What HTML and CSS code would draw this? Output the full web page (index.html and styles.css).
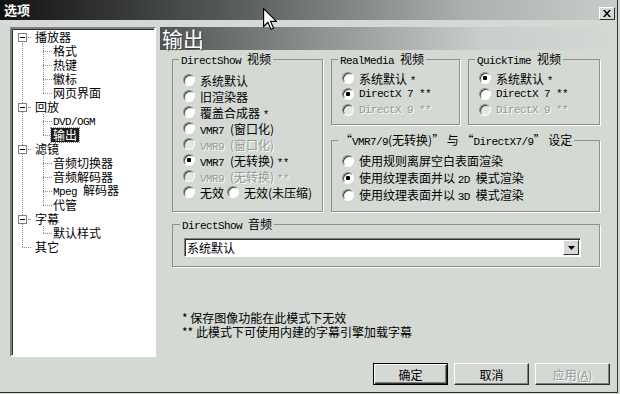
FILE: index.html
```html
<!DOCTYPE html>
<html>
<head>
	<meta charset="UTF-8">
	<title>选项</title>
	<link rel="stylesheet" href="styles.css">
</head>
<body>
	<div class="dialog">
		<div class="titlebar">
			<span class="title">选项</span>
			<span class="close">
				<svg width="8" height="7" viewBox="0 0 8 7"><path d="M0 0 L2 0 L4 2.5 L6 0 L8 0 L5 3.5 L8 7 L6 7 L4 4.5 L2 7 L0 7 L3 3.5 Z" fill="#000"/></svg>
			</span>
		</div>

		<div class="main">
			<!-- category tree -->
			<div class="tree">
				<div class="row"><span class="cell first"><i class="box"></i></span><span class="label">播放器</span></div>
				<div class="row"><span class="cell pipe"></span><span class="cell sub tee"></span><span class="label">格式</span></div>
				<div class="row"><span class="cell pipe"></span><span class="cell sub tee"></span><span class="label">热键</span></div>
				<div class="row"><span class="cell pipe"></span><span class="cell sub tee"></span><span class="label">徽标</span></div>
				<div class="row"><span class="cell pipe"></span><span class="cell sub ell"></span><span class="label">网页界面</span></div>
				<div class="row"><span class="cell tee"><i class="box"></i></span><span class="label">回放</span></div>
				<div class="row"><span class="cell pipe"></span><span class="cell sub tee"></span><span class="label"><span class="en">DVD/OGM</span></span></div>
				<div class="row"><span class="cell pipe"></span><span class="cell sub ell"></span><span class="label selected">输出</span></div>
				<div class="row"><span class="cell tee"><i class="box"></i></span><span class="label">滤镜</span></div>
				<div class="row"><span class="cell pipe"></span><span class="cell sub tee"></span><span class="label">音频切换器</span></div>
				<div class="row"><span class="cell pipe"></span><span class="cell sub tee"></span><span class="label">音频解码器</span></div>
				<div class="row"><span class="cell pipe"></span><span class="cell sub tee"></span><span class="label"><span class="en">Mpeg </span>解码器</span></div>
				<div class="row"><span class="cell pipe"></span><span class="cell sub ell"></span><span class="label">代管</span></div>
				<div class="row"><span class="cell tee"><i class="box"></i></span><span class="label">字幕</span></div>
				<div class="row"><span class="cell pipe"></span><span class="cell sub ell"></span><span class="label">默认样式</span></div>
				<div class="row"><span class="cell ell"></span><span class="label">其它</span></div>
			</div>

			<!-- settings page -->
			<div class="page">
				<div class="header">输出</div>

				<div class="groups">
					<fieldset class="group ds-video">
						<legend><span class="en">DirectShow </span>视频</legend>
						<div class="opt"><i class="radio"></i><span>系统默认</span></div>
						<div class="opt"><i class="radio"></i><span>旧渲染器</span></div>
						<div class="opt"><i class="radio"></i><span>覆盖合成器 <span class="en">*</span></span></div>
						<div class="opt"><i class="radio"></i><span><span class="en">VMR7 </span>(窗口化)</span></div>
						<div class="opt off"><i class="radio"></i><span><span class="en">VMR9 </span>(窗口化)</span></div>
						<div class="opt"><i class="radio on"></i><span><span class="en">VMR7 </span>(无转换) <span class="en">**</span></span></div>
						<div class="opt off"><i class="radio"></i><span><span class="en">VMR9 </span>(无转换) <span class="en">**</span></span></div>
						<div class="opt"><i class="radio"></i><span>无效</span><i class="radio"></i><span>无效(未压缩)</span></div>
					</fieldset>

					<fieldset class="group rm-video">
						<legend><span class="en">RealMedia </span>视频</legend>
						<div class="opt"><i class="radio"></i><span>系统默认 <span class="en">*</span></span></div>
						<div class="opt"><i class="radio on"></i><span class="en">DirectX 7 **</span></div>
						<div class="opt off"><i class="radio"></i><span class="en">DirectX 9 **</span></div>
					</fieldset>

					<fieldset class="group qt-video">
						<legend><span class="en">QuickTime </span>视频</legend>
						<div class="opt"><i class="radio on"></i><span>系统默认 <span class="en">*</span></span></div>
						<div class="opt"><i class="radio"></i><span class="en">DirectX 7 **</span></div>
						<div class="opt off"><i class="radio"></i><span class="en">DirectX 9 **</span></div>
					</fieldset>

					<fieldset class="group vmr">
						<legend>“<span class="en">VMR7/9</span>(无转换)” 与 “<span class="en">DirectX7/9</span>” 设定</legend>
						<div class="opt"><i class="radio"></i><span>使用规则离屏空白表面渲染</span></div>
						<div class="opt"><i class="radio on"></i><span>使用纹理表面并以 <span class="en">2D </span>模式渲染</span></div>
						<div class="opt"><i class="radio"></i><span>使用纹理表面并以 <span class="en">3D </span>模式渲染</span></div>
					</fieldset>
				</div>

				<fieldset class="group audio">
					<legend><span class="en">DirectShow </span>音频</legend>
					<div class="combo">
						<span class="combo-text">系统默认</span>
						<span class="combo-btn">
							<svg width="7" height="4" viewBox="0 0 7 4"><path d="M0 0 H7 L3.5 4 Z" fill="#000"/></svg>
						</span>
					</div>
				</fieldset>

				<div class="notes">
					<div>* 保存图像功能在此模式下无效</div>
					<div>** 此模式下可使用内建的字幕引擎加载字幕</div>
				</div>
			</div>
		</div>

		<div class="buttons">
			<button class="btn default">确定</button>
			<button class="btn">取消</button>
			<button class="btn off">应用(<u>A</u>)</button>
		</div>

		<svg class="cursor" width="14" height="22" viewBox="0 0 12 19" preserveAspectRatio="none">
			<path d="M0.5 0.5 L0.5 16 L4.2 12.4 L6.8 18.3 L9 17.3 L6.5 11.6 L11.5 11.6 Z" fill="#fff" stroke="#000" stroke-width="1"/>
		</svg>
	</div>
</body>
</html>
```

FILE: styles.css
```css
* {
	box-sizing: border-box;
}

body {
	margin: 0;
	background: #d4d9d4;
	font-family: "Noto Sans CJK SC", sans-serif;
	font-size: 12px;
	color: #000;
}

.en {
	font-family: "Liberation Mono", monospace;
	font-size: 11px;
	letter-spacing: -0.6px;
}

.dialog {
	position: relative;
	width: 618px;
	height: 393px;
	background: #d4d9d4;
	border-right: 1px solid #303030;
	border-bottom: 1px solid #303030;
}

/* title bar */

.titlebar {
	display: flex;
	align-items: center;
	justify-content: space-between;
	height: 20px;
	padding: 0 2px 0 4px;
	background: linear-gradient(90deg, #121212, #5c6060 40%, #a9b0ae 75%, #c6cdcb);
}

.title {
	color: #fff;
	font-weight: bold;
	font-size: 13px;
	line-height: 20px;
}

.close {
	display: flex;
	align-items: center;
	justify-content: center;
	width: 16px;
	height: 13px;
	margin-top: 6px;
	background: #d4d9d4;
	border: 1px solid;
	border-color: #fff #303030 #303030 #fff;
}

.cursor {
	position: absolute;
	left: 263px;
	top: 8px;
}

/* layout */

.main {
	display: flex;
	gap: 4px;
	padding: 7px 0 0 10px;
}

/* tree */

.tree {
	--v: repeating-linear-gradient(#8a8a8a 0 1px, transparent 1px 2px);
	--h: repeating-linear-gradient(90deg, #8a8a8a 0 1px, transparent 1px 2px);
	width: 146px;
	height: 330px;
	padding: 1px 0 0 1px;
	background: #fff;
	border: 2px solid;
	border-color: #808080 #fff #fff #808080;
	box-shadow: inset 1px 1px 0 #303030;
}

.tree .row {
	display: flex;
	align-items: center;
	height: 14px;
	line-height: 14px;
	white-space: nowrap;
}

.tree .cell {
	--x: 9px;
	display: flex;
	align-items: center;
	flex: none;
	width: 19px;
	height: 14px;
}

.tree .cell.sub {
	--x: 11px;
	width: 20px;
}

.tree .cell.pipe {
	background: var(--v) var(--x) 0 / 1px 100% no-repeat;
}

.tree .cell.tee {
	background:
		var(--v) var(--x) 0 / 1px 100% no-repeat,
		var(--h) var(--x) 7px / calc(100% - var(--x)) 1px no-repeat;
}

.tree .cell.ell {
	background:
		var(--v) var(--x) 0 / 1px 7px no-repeat,
		var(--h) var(--x) 7px / calc(100% - var(--x)) 1px no-repeat;
}

.tree .cell.first {
	background:
		var(--v) var(--x) 7px / 1px 7px no-repeat,
		var(--h) var(--x) 7px / calc(100% - var(--x)) 1px no-repeat;
}

.tree .box {
	width: 9px;
	height: 9px;
	margin-left: 5px;
	background: #fff;
	border: 1px solid #808080;
}

.tree .box::after {
	content: "";
	display: block;
	width: 5px;
	height: 1px;
	margin: 3px 1px;
	background: #000;
}

.tree .label {
	padding-left: 3px;
}

.tree .sub + .label {
	padding-left: 1px;
}

.tree .label.selected {
	margin-left: -1px;
	padding: 0 2px;
	background: #1c1c1c;
	color: #fff;
	outline: 1px dotted #888;
}

/* page */

.page {
	width: 456px;
}

.header {
	height: 23px;
	padding-left: 2px;
	background: linear-gradient(90deg, #4f5452, #8d9391 35%, #c7cdcb 70%, #d4d9d4);
	color: #fff;
	font-size: 21px;
	line-height: 23px;
	text-shadow: 1px 1px 0 #3a3e3c;
}

.groups {
	display: grid;
	grid-template-columns: 151px 129px 132px;
	grid-template-rows: 72px 78px;
	column-gap: 8px;
	row-gap: 9px;
	margin: 3px 0 0 12px;
}

.group {
	margin: 0;
	min-width: 0;
	padding: 0 0 0 10px;
	border: 1px solid #8c918c;
	box-shadow: 1px 1px 0 #fff;
}

.group legend {
	margin-left: -4px;
	padding: 0 2px;
	height: 12px;
	line-height: 12px;
	white-space: nowrap;
}

.ds-video {
	grid-row: 1 / 3;
	padding-top: 7px;
}

.rm-video,
.qt-video {
	padding-top: 5px;
}

.vmr {
	grid-column: 2 / 4;
	padding-top: 6px;
}

.opt {
	display: flex;
	align-items: center;
	height: 16px;
	white-space: nowrap;
}

.vmr .opt {
	height: 17px;
}

.opt.off {
	color: #969a96;
	text-shadow: 1px 1px 0 #fff;
}

.radio {
	flex: none;
	width: 12px;
	height: 12px;
	margin-right: 5px;
	border-radius: 50%;
	background: #fff;
	border: 1px solid;
	border-color: #8a8e8a #fff #fff #8a8e8a;
	box-shadow: inset 1px 1px 0 #404040;
}

.opt span + .radio {
	margin-left: 3px;
}

.radio.on {
	background: radial-gradient(circle, #000 0 2px, #fff 2.5px);
}

.opt.off .radio {
	background: #e4e8e4;
}

/* audio */

.audio {
	width: 428px;
	height: 49px;
	margin: 6px 0 0 12px;
	padding: 8px 0 0 11px;
}

.combo {
	display: flex;
	align-items: center;
	justify-content: space-between;
	width: 397px;
	height: 19px;
	background: #fff;
	border: 1px solid;
	border-color: #808080 #fff #fff #808080;
	box-shadow: inset 1px 1px 0 #303030;
}

.combo-text {
	padding-left: 2px;
	line-height: 16px;
}

.combo-btn {
	display: flex;
	align-items: center;
	justify-content: center;
	width: 16px;
	height: 15px;
	margin-right: 1px;
	background: #d4d9d4;
	border: 1px solid;
	border-color: #fff #303030 #303030 #fff;
}

/* notes */

.notes {
	margin: 44px 0 0 22px;
	line-height: 14px;
}

/* buttons */

.buttons {
	display: flex;
	justify-content: flex-end;
	gap: 6px;
	margin-top: 6px;
	padding-right: 7px;
}

.btn {
	width: 75px;
	height: 22px;
	padding: 0;
	font-family: "Noto Sans CJK SC", sans-serif;
	font-size: 12px;
	background: #d4d9d4;
	border: 1px solid;
	border-color: #fff #303030 #303030 #fff;
	box-shadow: inset -1px -1px 0 #808080;
}

.btn.default {
	border: 1px solid #000;
	box-shadow: inset 1px 1px 0 #fff, inset -1px -1px 0 #303030, inset -2px -2px 0 #808080;
}

.btn.off {
	color: #969a96;
	text-shadow: 1px 1px 0 #fff;
}
```
